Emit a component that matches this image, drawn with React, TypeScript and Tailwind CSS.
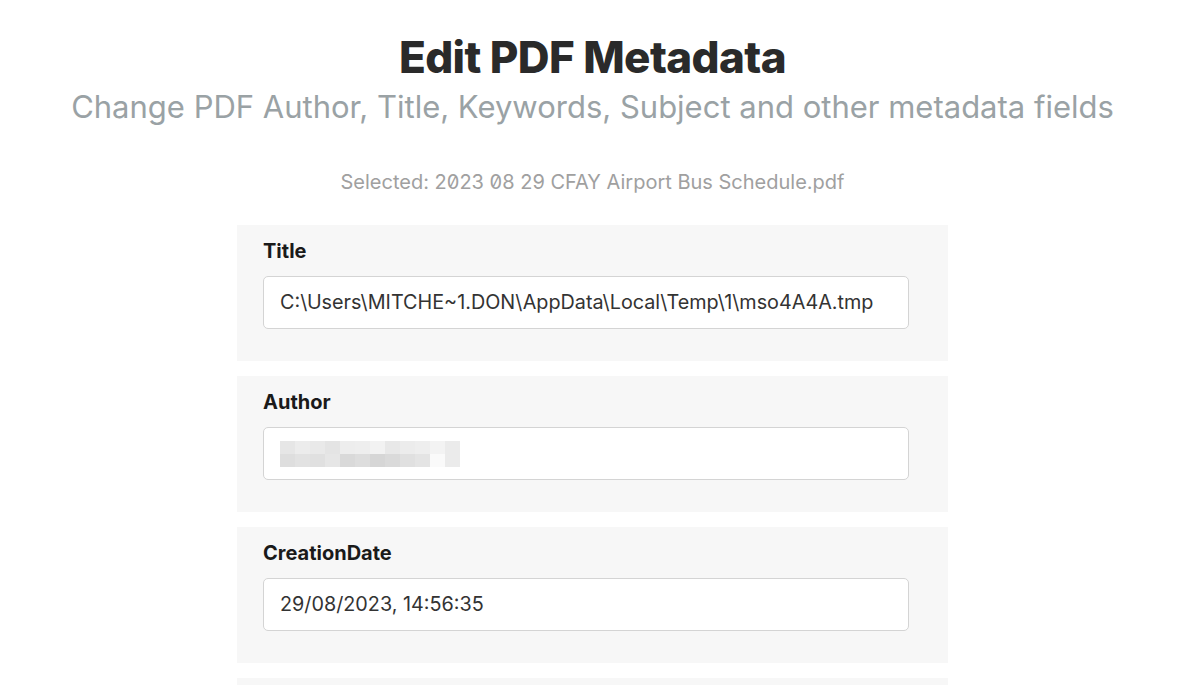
import React from 'react';

const fields = [
  {label: 'Title', value: 'C:\\Users\\MITCHE~1.DON\\AppData\\Local\\Temp\\1\\mso4A4A.tmp'},
  {label: 'Author', value: '', blurred: true},
  {label: 'CreationDate', value: '29/08/2023, 14:56:35'},
  {label: 'Producer', value: ''},
];

function Blur() {
  // pixelated redaction of the author name
  const top = ['#e6e6e6', '#ececec', '#e9e9e9', '#e4e4e4', '#ededed', '#eeeeee', '#f2f2f2', '#e8e8e8', '#ececec', '#eeeeee', '#f3f3f3', '#ebebeb'];
  const bottom = ['#dedede', '#e2e2e2', '#e0e0e0', '#e6e6e6', '#d9d9d9', '#dddddd', '#d6d6d6', '#dadada', '#e0e0e0', '#e4e4e4', '#fafafa', '#ebebeb'];
  return (
    <div className="flex flex-col">
      <div className="flex">
        {top.map((c, i) => <span key={i} className="w-[15px] h-[13px]" style={{background: c}}/>)}
      </div>
      <div className="flex">
        {bottom.map((c, i) => <span key={i} className="w-[15px] h-[13px]" style={{background: c}}/>)}
      </div>
    </div>
  );
}

export default function App() {
  return (
    <div className="h-[685px] overflow-hidden bg-white pr-[15px] font-['Inter',sans-serif]">
      <header className="pt-[31px] text-center">
        <h1 className="text-[44px] leading-[52px] font-extrabold text-[#2a2a2a] tracking-[-0.6px]">
          Edit PDF Metadata
        </h1>
        <p className="mt-[6px] text-[31px] leading-[36px] text-[#9aa2a5]">
          Change PDF Author, Title, Keywords, Subject and other metadata fields
        </p>
      </header>

      <p className="mt-[44px] text-center text-[20px] leading-[26px] text-[#a0a0a0] slashed-zero">
        Selected: 2023 08 29 CFAY Airport Bus Schedule.pdf
      </p>

      <div className="mt-[30px] mx-auto w-[711px] flex flex-col gap-[15px]">
        {fields.map(f => (
          <div key={f.label} className="bg-[#f7f7f7] pt-[15px] pb-[32px] pl-[26px] pr-[39px]">
            <label className="block text-[20px] leading-[22px] font-bold text-[#1a1a1a]">
              {f.label}
            </label>
            <div className="mt-[14px] h-[53px] bg-white border border-[#d4d4d4] rounded-[5px] px-[16px] flex items-center text-[19.8px] text-[#333]">
              {f.blurred ? <Blur/> : f.value}
            </div>
          </div>
        ))}
      </div>
    </div>
  );
}
